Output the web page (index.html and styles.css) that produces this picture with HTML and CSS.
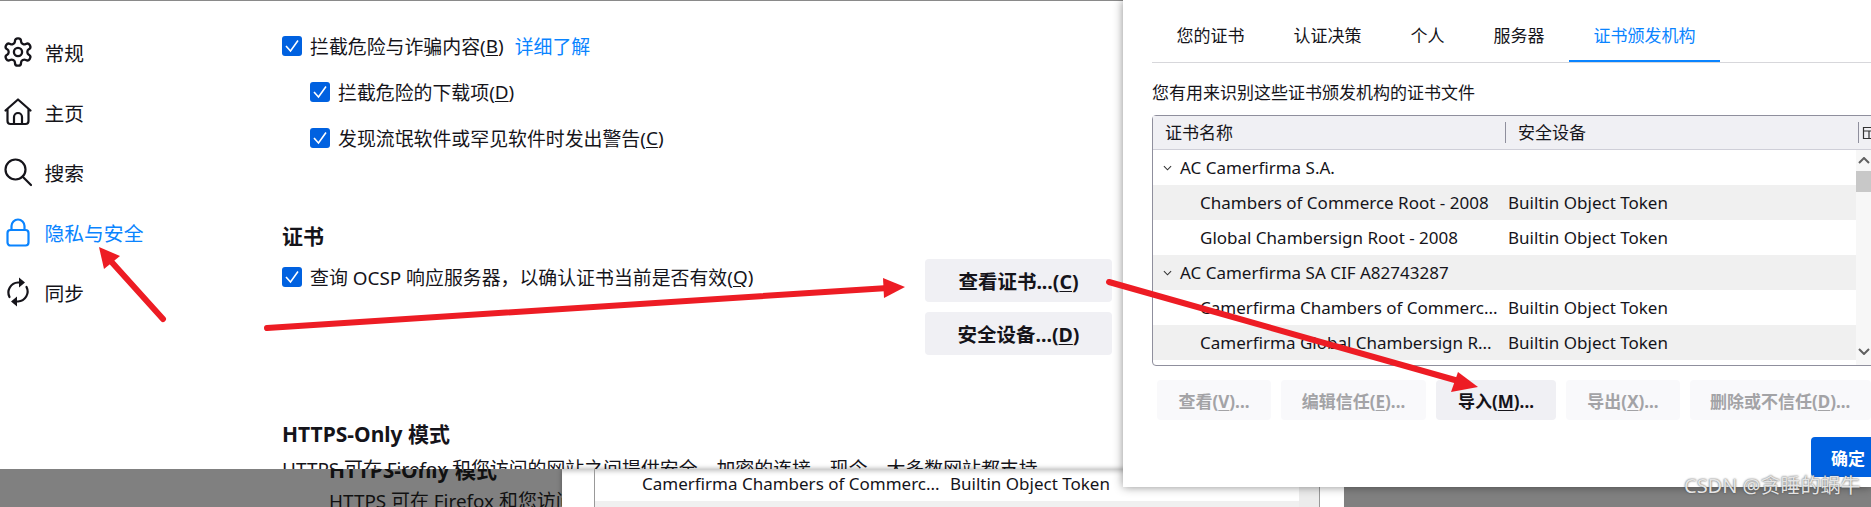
FILE: index.html
```html
<!DOCTYPE html>
<html lang="zh-CN">
<head>
  <meta charset="UTF-8" />
  <title>隐私与安全 - 证书管理器</title>
  <link rel="stylesheet" href="styles.css">
</head>
<body>
  <div class="page">
    <aside class="sidebar">
      <a class="nav-item">
        <svg class="nav-icon gear" viewBox="2.500 1 19 22"><path d="M12.220 2h-.44a2 2 0 0 0-2 2v.18a2 2 0 0 1-1 1.730l-.43.25a2 2 0 0 1-2 0l-.15-.08a2 2 0 0 0-2.730.73l-.22.38a2 2 0 0 0 .73 2.730l.15.1a2 2 0 0 1 1 1.720v.51a2 2 0 0 1-1 1.740l-.15.09a2 2 0 0 0-.73 2.730l.22.38a2 2 0 0 0 2.730.73l.15-.08a2 2 0 0 1 2 0l.43.25a2 2 0 0 1 1 1.730V20a2 2 0 0 0 2 2h.44a2 2 0 0 0 2-2v-.18a2 2 0 0 1 1-1.730l.43-.25a2 2 0 0 1 2 0l.15.08a2 2 0 0 0 2.730-.73l.22-.39a2 2 0 0 0-.73-2.730l-.15-.08a2 2 0 0 1-1-1.740v-.5a2 2 0 0 1 1-1.740l.15-.09a2 2 0 0 0 .73-2.730l-.22-.38a2 2 0 0 0-2.730-.73l-.15.08a2 2 0 0 1-2 0l-.43-.25a2 2 0 0 1-1-1.730V4a2 2 0 0 0-2-2z"/><circle cx="12" cy="12" r="3"/></svg>
        常规
      </a>
      <a class="nav-item">
        <svg class="nav-icon" viewBox="0 0 28 28"><path d="M1.500 12.500 14 1.500l12.500 11M3.500 11V23a3 3 0 0 0 3 3h15a3 3 0 0 0 3-3V11M10 26v-7a4 4 0 0 1 8 0v7"/></svg>
        主页
      </a>
      <a class="nav-item">
        <svg class="nav-icon" viewBox="0 0 28 28"><circle cx="11.500" cy="11.500" r="10"/><path d="m18.500 18.500 8.500 8.500"/></svg>
        搜索
      </a>
      <a class="nav-item active">
        <svg class="nav-icon lock" viewBox="0 0 28 30"><rect x="3.500" y="13" width="21" height="15.500" rx="3"/><path d="M7.500 13V9a6.500 6.500 0 0 1 13 0v4"/></svg>
        隐私与安全
      </a>
      <a class="nav-item">
        <svg class="nav-icon" viewBox="0 0 28 30"><path d="M5.500 20A10 10 0 0 1 14 5.500h2M22.500 10A10 10 0 0 1 14 24.500h-2"/><path class="solid" d="M15 .500l6 5-6 5zM13 19.500l-6 5 6 5z"/></svg>
        同步
      </a>
    </aside>

    <main class="content">
      <label class="check-row"><span class="check"><svg viewBox="0 0 20 20"><path d="m4 10 4.500 5L16 4.500"/></svg></span>拦截危险与诈骗内容(<u>B</u>)<a class="more-link">详细了解</a></label>
      <label class="check-row sub"><span class="check"><svg viewBox="0 0 20 20"><path d="m4 10 4.500 5L16 4.500"/></svg></span>拦截危险的下载项(<u>D</u>)</label>
      <label class="check-row sub"><span class="check"><svg viewBox="0 0 20 20"><path d="m4 10 4.500 5L16 4.500"/></svg></span>发现流氓软件或罕见软件时发出警告(<u>C</u>)</label>

      <h2 class="section-title cert-title">证书</h2>
      <div class="cert-section">
        <label class="check-row"><span class="check"><svg viewBox="0 0 20 20"><path d="m4 10 4.500 5L16 4.500"/></svg></span>查询 OCSP 响应服务器，以确认证书当前是否有效(<u>Q</u>)</label>
        <div class="cert-buttons">
          <button class="btn">查看证书...(<u>C</u>)</button>
          <button class="btn">安全设备...(<u>D</u>)</button>
        </div>
      </div>

      <h2 class="section-title https-title">HTTPS-Only 模式</h2>
      <p class="body-line">HTTPS 可在 Firefox 和您访问的网站之间提供安全、加密的连接。现今，大多数网站都支持</p>
    </main>
  </div>

  <!-- second screenshot pasted along the bottom -->
  <div class="dim-layer">
    <h2 class="section-title">HTTPS-Only 模式</h2>
    <p class="body-line">HTTPS 可在 Firefox 和您访问的网站之间提供安全、加密的连接</p>
  </div>
  <div class="under-dialog">
    <div class="under-tree">
      <div class="under-row"><span class="under-name">Camerfirma Chambers of Commerc...</span><span>Builtin Object Token</span></div>
      <div class="under-row alt"></div>
    </div>
    <div class="under-scroll"></div>
  </div>
  <div class="dim-right"></div>

  <div class="dialog">
    <nav class="tabs">
      <a class="tab">您的证书</a>
      <a class="tab">认证决策</a>
      <a class="tab">个人</a>
      <a class="tab">服务器</a>
      <a class="tab active">证书颁发机构</a>
    </nav>
    <p class="dialog-desc">您有用来识别这些证书颁发机构的证书文件</p>

    <div class="tree">
      <div class="tree-head">
        <span class="col-name">证书名称</span>
        <span class="col-device">安全设备</span>
        <svg class="col-picker" viewBox="0 0 14 14"><path d="M1.500 1.500h11v11h-11zM1.500 5h11M7 5v7.500"/></svg>
      </div>
      <div class="tree-body">
        <div class="tree-rows">
          <div class="tree-row group"><svg class="twisty" viewBox="0 0 10 6"><path d="m1 1 4 4 4-4"/></svg>AC Camerfirma S.A.</div>
          <div class="tree-row alt"><span class="cell-name">Chambers of Commerce Root - 2008</span><span>Builtin Object Token</span></div>
          <div class="tree-row"><span class="cell-name">Global Chambersign Root - 2008</span><span>Builtin Object Token</span></div>
          <div class="tree-row group alt"><svg class="twisty" viewBox="0 0 10 6"><path d="m1 1 4 4 4-4"/></svg>AC Camerfirma SA CIF A82743287</div>
          <div class="tree-row"><span class="cell-name">Camerfirma Chambers of Commerc...</span><span>Builtin Object Token</span></div>
          <div class="tree-row alt"><span class="cell-name">Camerfirma Global Chambersign R...</span><span>Builtin Object Token</span></div>
        </div>
        <div class="scrollbar">
          <svg class="scroll-arrow" viewBox="0 0 12 7"><path d="m1 6 5-5 5 5"/></svg>
          <div class="scroll-thumb"></div>
          <svg class="scroll-arrow down" viewBox="0 0 12 7"><path d="m1 1 5 5 5-5"/></svg>
        </div>
      </div>
    </div>

    <div class="dialog-actions">
      <button class="btn small off w-view">查看(<u>V</u>)...</button>
      <button class="btn small off w-edit">编辑信任(<u>E</u>)...</button>
      <button class="btn small w-import">导入(<u>M</u>)...</button>
      <button class="btn small off w-view">导出(<u>X</u>)...</button>
      <button class="btn small off w-delete">删除或不信任(<u>D</u>)...</button>
    </div>
    <div class="dialog-footer">
      <button class="btn-primary">确定</button>
    </div>
  </div>

  <!-- red annotation arrows -->
  <svg class="arrows" viewBox="0 0 1871 507">
    <line x1="163" y1="319" x2="108" y2="258"/>
    <polygon points="99,247 104,269 120,256"/>
    <line x1="267" y1="328" x2="888" y2="288"/>
    <polygon points="905,287 883,278 884,298"/>
    <line x1="1109" y1="282" x2="1462" y2="382"/>
    <polygon points="1478,387 1458,372 1451,392"/>
  </svg>

  <div class="watermark">CSDN @贪睡的蜗牛</div>
</body>
</html>
```

FILE: styles.css
```css
* {
  box-sizing: border-box;
}

html, body {
  margin: 0;
  height: 507px;
  overflow: hidden;
}

body {
  position: relative;
  width: 1871px;
  background: #fff;
  color: #15141a;
  font-family: "Noto Sans", "Noto Sans CJK SC", sans-serif;
  font-size: 18.9px;
}

u {
  text-underline-offset: 2px;
}

.page {
  display: flex;
  height: 507px;
  overflow: hidden;
  border-top: 1px solid #8a8a8a;
}

/* sidebar */
.sidebar {
  width: 282px;
  flex: none;
  padding: 21px 0 0 4px;
  font-size: 19.8px;
}

.nav-item {
  display: flex;
  align-items: center;
  gap: 12.500px;
  height: 60px;
}

.nav-item.active {
  color: #0a84ff;
}

.nav-icon {
  width: 28px;
  height: 30px;
  flex: none;
  fill: none;
  stroke: currentColor;
  stroke-width: 2.2;
  stroke-linecap: round;
  stroke-linejoin: round;
}

.nav-icon.gear {
  stroke-width: 1.7;
}

.nav-icon .solid {
  fill: currentColor;
  stroke: none;
}

/* main column */
.content {
  flex: 1;
  height: 468px;
  padding-top: 22px;
  overflow: hidden;
}

.check-row {
  display: flex;
  align-items: center;
  height: 46.2px;
  white-space: pre;
}

.check-row.sub {
  padding-left: 28px;
}

.check {
  width: 20px;
  height: 20px;
  margin-right: 8px;
  flex: none;
  border-radius: 3px;
  background: #0061e0;
}

.check svg {
  display: block;
  fill: none;
  stroke: #fff;
  stroke-width: 1.6;
}

.more-link {
  margin-left: 11px;
  color: #0a84ff;
}

.section-title {
  margin: 0;
  font-size: 21px;
  font-weight: 700;
  line-height: 30px;
}

.cert-title {
  margin-top: 59px;
}

.cert-section {
  display: flex;
  justify-content: space-between;
  align-items: flex-start;
  width: 830px;
  margin-top: 3px;
}

.cert-buttons {
  display: flex;
  flex-direction: column;
  gap: 10px;
  width: 187px;
  margin-top: 5px;
}

.btn {
  height: 43px;
  border: none;
  border-radius: 4px;
  background: #f0f0f4;
  color: #15141a;
  font: inherit;
  font-size: 19.5px;
  font-weight: 700;
  white-space: nowrap;
}

.https-title {
  margin-top: 64px;
}

.body-line {
  margin: 5px 0 0;
  line-height: 30px;
  white-space: nowrap;
}

/* pasted screenshot underneath */
.dim-layer {
  position: absolute;
  left: 0;
  top: 469px;
  width: 562px;
  height: 38px;
  padding-left: 329px;
  overflow: hidden;
  background: #808080;
  color: #111;
}

.dim-layer .section-title {
  margin-top: -14px;
}

.dim-layer .body-line {
  margin-top: 1px;
}

.under-dialog {
  position: absolute;
  left: 562px;
  top: 469px;
  width: 782px;
  height: 38px;
  padding-left: 32px;
  display: flex;
  background: #fff;
  box-shadow: inset 0 6px 5px -4px rgba(0, 0, 0, 0.25), 0 0 5px rgba(0, 0, 0, 0.35);
  font-size: 17px;
}

.under-tree {
  width: 705px;
  overflow: hidden;
  border-left: 1px solid #999;
}

.under-row {
  display: flex;
  height: 32px;
  align-items: center;
  padding: 0 0 4px 47px;
  white-space: nowrap;
}

.under-row.alt {
  background: #f0f0f0;
}

.under-name {
  width: 308px;
}

.under-scroll {
  width: 21px;
  background: #ececec;
  border-right: 1px solid #999;
}

.dim-right {
  position: absolute;
  left: 1344px;
  top: 469px;
  right: 0;
  bottom: 0;
  background: #808080;
}

/* certificate manager dialog */
.dialog {
  position: absolute;
  left: 1123px;
  top: 0;
  right: 0;
  height: 487px;
  padding-left: 29px;
  overflow: hidden;
  background: #fff;
  box-shadow: 0 0 9px rgba(0, 0, 0, 0.45);
  font-size: 17px;
}

.tabs {
  display: flex;
  height: 63px;
  border-bottom: 1px solid #d7d7db;
}

.tab {
  height: 62px;
  padding: 0 24.500px;
  line-height: 72px;
}

.tab.active {
  color: #0a84ff;
  border-bottom: 2px solid #0a84ff;
}

.dialog-desc {
  margin: 15px 0 7px;
  line-height: 30px;
}

.tree {
  width: 760px;
  height: 251px;
  border: 1px solid #8f8f9d;
  border-radius: 4px;
}

.tree-head {
  display: flex;
  align-items: center;
  height: 34px;
  border-bottom: 1px solid #cfcfd8;
  background: #f0f0f4;
}

.tree-head span {
  height: 21px;
  line-height: 21px;
  overflow: hidden;
}

.col-name {
  width: 353px;
  padding-left: 12px;
  border-right: 1px solid #8f8f9d;
}

.col-device {
  width: 353px;
  padding-left: 12px;
  border-right: 1px solid #8f8f9d;
}

.col-picker {
  width: 14px;
  height: 14px;
  margin-left: 3px;
  flex: none;
  fill: none;
  stroke: #333;
  stroke-width: 1.2;
}

.tree-body {
  display: flex;
}

.tree-rows {
  width: 703px;
  flex: none;
}

.tree-row {
  display: flex;
  align-items: center;
  height: 35px;
  padding-left: 47px;
  white-space: nowrap;
}

.tree-row.group {
  padding-left: 10px;
}

.tree-row.alt {
  background: #f0f0f0;
}

.cell-name {
  width: 308px;
}

.twisty {
  width: 9px;
  height: 6px;
  margin-right: 8px;
  fill: none;
  stroke: #333;
  stroke-width: 1.2;
}

.scrollbar {
  width: 15px;
  height: 215px;
  background: #f7f7f7;
}

.scroll-arrow {
  display: block;
  width: 12px;
  height: 7px;
  margin: 7px 0 0 2px;
  fill: none;
  stroke: #606060;
  stroke-width: 2;
}

.scroll-arrow.down {
  margin-top: 156px;
}

.scroll-thumb {
  height: 21px;
  margin-top: 7px;
  background: #c8c8c8;
}

.dialog-actions {
  display: flex;
  gap: 10px;
  margin: 14px 0 0 5px;
}

.btn.small {
  flex: none;
  height: 40px;
  font-size: 17px;
}

.btn.off {
  background: #f9f9fb;
  color: #a3a3a6;
}

.w-view { width: 114px; }
.w-edit { width: 145px; }
.w-import { width: 120px; }
.w-delete { width: 181px; padding: 0 0 0 20px; text-align: left; }

.dialog-footer {
  margin: 17px 0 0 659px;
}

.btn-primary {
  display: block;
  width: 90px;
  height: 40px;
  padding: 0 0 0 20px;
  border: none;
  border-radius: 4px;
  background: #0061e0;
  color: #fff;
  font: inherit;
  font-weight: 700;
  text-align: left;
}

/* annotations */
.arrows {
  position: absolute;
  inset: 0;
  width: 1871px;
  height: 507px;
  pointer-events: none;
}

.arrows line {
  stroke: #ed1c24;
  stroke-width: 6;
  stroke-linecap: round;
}

.arrows polygon {
  fill: #ed1c24;
}

.watermark {
  position: absolute;
  left: 1684px;
  top: 473px;
  line-height: 26px;
  font-size: 20px;
  color: #e4e4e4;
  text-shadow: 0 0 2px #444;
  white-space: nowrap;
}
```
